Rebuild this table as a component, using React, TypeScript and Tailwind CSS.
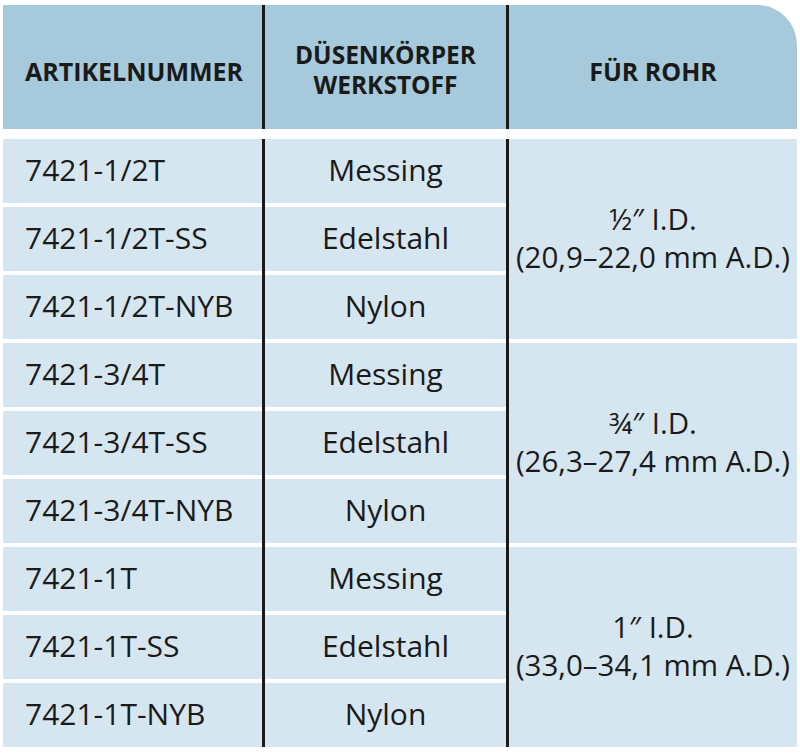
const groups = [
  {
    size: "½″ I.D.",
    od: "(20,9–22,0 mm A.D.)",
    rows: [
      ["7421-1/2T", "Messing"],
      ["7421-1/2T-SS", "Edelstahl"],
      ["7421-1/2T-NYB", "Nylon"],
    ],
  },
  {
    size: "¾″ I.D.",
    od: "(26,3–27,4 mm A.D.)",
    rows: [
      ["7421-3/4T", "Messing"],
      ["7421-3/4T-SS", "Edelstahl"],
      ["7421-3/4T-NYB", "Nylon"],
    ],
  },
  {
    size: "1″ I.D.",
    od: "(33,0–34,1 mm A.D.)",
    rows: [
      ["7421-1T", "Messing"],
      ["7421-1T-SS", "Edelstahl"],
      ["7421-1T-NYB", "Nylon"],
    ],
  },
];

const allRows = groups.flatMap((g) => g.rows);

export default function App() {
  return (
    <div
      className="min-h-[754px] w-[800px] bg-white pl-[3px] pt-[5px] text-[#1a1a1a]"
      style={{ fontFamily: '"Open Sans", "Noto Sans", sans-serif' }}
    >
      <div className="flex w-[794px] flex-col gap-[10px]">
        {/* Header */}
        <div className="flex h-[124px] rounded-tr-[40px] bg-[#a6c9db] text-[25px] font-bold leading-[28px]">
          <div className="flex w-[259px] items-center pl-[22px] pt-[8px]">ARTIKELNUMMER</div>
          <div className="w-[3px] bg-[#1a1a1a]" />
          <div className="flex w-[241px] flex-col items-center justify-center pt-[6px] text-center text-[24.5px] leading-[30px]">
            <span>DÜSENKÖRPER</span>
            <span>WERKSTOFF</span>
          </div>
          <div className="w-[3px] bg-[#1a1a1a]" />
          <div className="flex flex-1 items-center justify-center pt-[8px]">FÜR ROHR</div>
        </div>

        {/* Body */}
        <div className="flex text-[30px] leading-[36px]">
          <div className="flex w-[259px] flex-col gap-[4px]">
            {allRows.map(([code]) => (
              <div key={code} className="flex h-[64px] items-center bg-[#d5e6f0] pb-[3px] pl-[22px]">
                {code}
              </div>
            ))}
          </div>
          <div className="w-[3px] bg-[#1a1a1a]" />
          <div className="flex w-[241px] flex-col gap-[4px]">
            {allRows.map(([code, material]) => (
              <div key={code} className="flex h-[64px] items-center justify-center bg-[#d5e6f0] pb-[3px]">
                {material}
              </div>
            ))}
          </div>
          <div className="w-[3px] bg-[#1a1a1a]" />
          <div className="flex flex-1 flex-col gap-[4px]">
            {groups.map((g) => (
              <div
                key={g.size}
                className="flex h-[200px] flex-col items-center justify-center bg-[#d5e6f0] pb-[2px] text-[29.5px] leading-[38px]"
              >
                <span>{g.size}</span>
                <span>{g.od}</span>
              </div>
            ))}
          </div>
        </div>
      </div>
    </div>
  );
}
